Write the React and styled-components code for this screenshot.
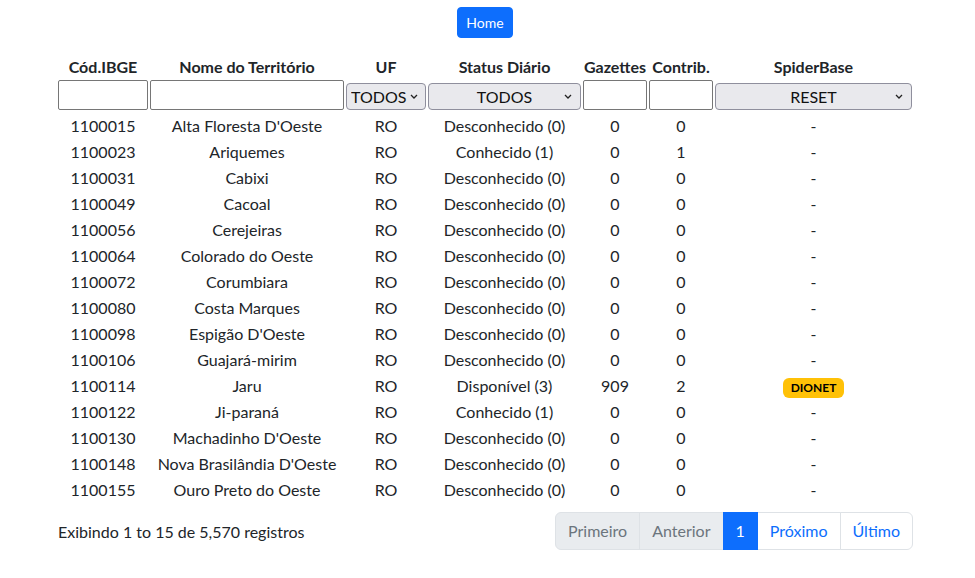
import React from "react";
import styled, { createGlobalStyle } from "styled-components";

const GlobalStyle = createGlobalStyle`
  body {
    margin: 0;
    font-family: Lato, "Liberation Sans", sans-serif;
    font-size: 16px;
    line-height: 1.5;
    color: #212529;
    background: #fff;
  }
  * { box-sizing: border-box; }
`;

const Page = styled.div`
  padding: 7px 5px 0 0;
  display: flex;
  flex-direction: column;
  align-items: center;
`;

const HomeButton = styled.button`
  font-family: inherit;
  font-size: 14px;
  line-height: 1.5;
  padding: 4px 8px;
  color: #fff;
  background: #0d6efd;
  border: 1px solid #0d6efd;
  border-radius: 4px;
  cursor: pointer;
`;

const Wrapper = styled.div`
  width: 856px;
  margin-top: 17px;
`;

const Table = styled.table`
  width: 100%;
  table-layout: fixed;
  border-collapse: separate;
  border-spacing: 0;
`;

const Th = styled.th`
  font-weight: 700;
  text-align: center;
  padding: 0 1px;
  height: 24px;
  white-space: nowrap;
`;

const FilterCell = styled.td`
  padding: 1px 1px 3px;
`;

const TextInput = styled.input`
  display: block;
  width: 100%;
  height: 30px;
  border: 1px solid #767676;
  border-radius: 2px;
  background: #fff;
`;

const chevron = `url("data:image/svg+xml,%3Csvg xmlns='http://www.w3.org/2000/svg' width='8' height='5' viewBox='0 0 8 5'%3E%3Cpath d='M1 1l3 3 3-3' fill='none' stroke='%23222' stroke-width='1.3'/%3E%3C/svg%3E")`;

const Select = styled.select`
  display: block;
  width: 100%;
  height: 27px;
  margin-top: 2px;
  appearance: none;
  font-family: inherit;
  font-size: 16px;
  color: #111;
  border: 1px solid #8f8f9d;
  border-radius: 4px;
  background: #e9e9ed ${chevron} no-repeat right ${(p) => (p.$left ? "7px" : "8px")} center;
  padding: ${(p) => (p.$left ? "0 16px 0 4px" : "0 20px")};
  text-align: ${(p) => (p.$left ? "left" : "center")};
  text-align-last: ${(p) => (p.$left ? "left" : "center")};
`;

const Td = styled.td`
  text-align: center;
  padding: 1px 1px;
  height: 26px;
  white-space: nowrap;
`;

const Badge = styled.span`
  display: inline-block;
  padding: 3px 8px;
  font-size: 12px;
  font-weight: 700;
  line-height: 1.2;
  color: #000;
  background: #ffc107;
  border-radius: 6px;
`;

const Footer = styled.div`
  display: flex;
  justify-content: space-between;
  align-items: center;
  margin-top: 9px;
`;

const Info = styled.div`
  padding-left: 1px;
  padding-top: 2px;
`;

const Pagination = styled.ul`
  display: flex;
  list-style: none;
  margin: 0;
  padding: 0;
`;

const PageItem = styled.li`
  padding: 6px 12px;
  border: 1px solid ${(p) => (p.$active ? "#0d6efd" : "#dee2e6")};
  margin-left: -1px;
  color: ${(p) => (p.$active ? "#fff" : p.$disabled ? "#6c757d" : "#0d6efd")};
  background: ${(p) => (p.$active ? "#0d6efd" : p.$disabled ? "#e9ecef" : "#fff")};
  position: relative;
  z-index: ${(p) => (p.$active ? 1 : 0)};
  &:first-child {
    margin-left: 0;
    border-radius: 6px 0 0 6px;
  }
  &:last-child {
    border-radius: 0 6px 6px 0;
  }
`;

const widths = [92, 196, 82, 155, 66, 66, 199];

const rows = [
  ["1100015", "Alta Floresta D'Oeste", "Desconhecido (0)", 0, 0],
  ["1100023", "Ariquemes", "Conhecido (1)", 0, 1],
  ["1100031", "Cabixi", "Desconhecido (0)", 0, 0],
  ["1100049", "Cacoal", "Desconhecido (0)", 0, 0],
  ["1100056", "Cerejeiras", "Desconhecido (0)", 0, 0],
  ["1100064", "Colorado do Oeste", "Desconhecido (0)", 0, 0],
  ["1100072", "Corumbiara", "Desconhecido (0)", 0, 0],
  ["1100080", "Costa Marques", "Desconhecido (0)", 0, 0],
  ["1100098", "Espigão D'Oeste", "Desconhecido (0)", 0, 0],
  ["1100106", "Guajará-mirim", "Desconhecido (0)", 0, 0],
  ["1100114", "Jaru", "Disponível (3)", 909, 2, "DIONET"],
  ["1100122", "Ji-paraná", "Conhecido (1)", 0, 0],
  ["1100130", "Machadinho D'Oeste", "Desconhecido (0)", 0, 0],
  ["1100148", "Nova Brasilândia D'Oeste", "Desconhecido (0)", 0, 0],
  ["1100155", "Ouro Preto do Oeste", "Desconhecido (0)", 0, 0],
];

export default function App() {
  return (
    <>
      <GlobalStyle />
      <Page>
        <HomeButton>Home</HomeButton>
        <Wrapper>
          <Table>
            <colgroup>
              {widths.map((w, i) => (
                <col key={i} style={{ width: w }} />
              ))}
            </colgroup>
            <thead>
              <tr>
                <Th>Cód.IBGE</Th>
                <Th>Nome do Território</Th>
                <Th>UF</Th>
                <Th>Status Diário</Th>
                <Th>Gazettes</Th>
                <Th>Contrib.</Th>
                <Th>SpiderBase</Th>
              </tr>
              <tr>
                <FilterCell><TextInput /></FilterCell>
                <FilterCell><TextInput /></FilterCell>
                <FilterCell>
                  <Select $left defaultValue="TODOS"><option>TODOS</option></Select>
                </FilterCell>
                <FilterCell>
                  <Select defaultValue="TODOS"><option>TODOS</option></Select>
                </FilterCell>
                <FilterCell><TextInput /></FilterCell>
                <FilterCell><TextInput /></FilterCell>
                <FilterCell>
                  <Select defaultValue="RESET"><option>RESET</option></Select>
                </FilterCell>
              </tr>
            </thead>
            <tbody>
              {rows.map((r) => (
                <tr key={r[0]}>
                  <Td>{r[0]}</Td>
                  <Td>{r[1]}</Td>
                  <Td>RO</Td>
                  <Td>{r[2]}</Td>
                  <Td>{r[3]}</Td>
                  <Td>{r[4]}</Td>
                  <Td>{r[5] ? <Badge>{r[5]}</Badge> : "-"}</Td>
                </tr>
              ))}
            </tbody>
          </Table>
          <Footer>
            <Info>Exibindo 1 to 15 de 5,570 registros</Info>
            <Pagination>
              <PageItem $disabled>Primeiro</PageItem>
              <PageItem $disabled>Anterior</PageItem>
              <PageItem $active>1</PageItem>
              <PageItem>Próximo</PageItem>
              <PageItem>Último</PageItem>
            </Pagination>
          </Footer>
        </Wrapper>
      </Page>
    </>
  );
}
